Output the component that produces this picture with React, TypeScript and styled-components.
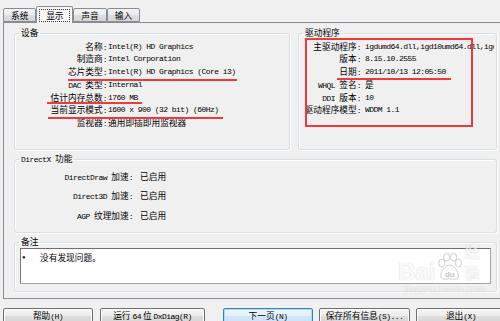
import React from "react";
import styled, { createGlobalStyle } from "styled-components";

const Global = createGlobalStyle`
  html, body { margin: 0; padding: 0; background: #f0f0f0; }
  body { width: 500px; height: 321px; overflow: hidden; }
`;

const Window = styled.div`
  position: relative;
  width: 500px;
  height: 321px;
  overflow: hidden;
  background: #f0f0f0;
  color: #000;
  font-family: "Noto Sans CJK SC", "Liberation Sans", sans-serif;
  font-size: 8.7px;
  line-height: 12.8px;
`;

const M = styled.span`
  font-family: "Liberation Mono", monospace;
  font-size: 8px;
  letter-spacing: -0.55px;
`;

const TabStrip = styled.div`
  display: flex;
  align-items: flex-end;
  height: 22px;
  padding-left: 3px;
  box-sizing: border-box;
  position: relative;
  z-index: 2;
`;

const Tab = styled.div<{ $active?: boolean }>`
  box-sizing: border-box;
  display: flex;
  align-items: center;
  height: ${(p) => (p.$active ? 17 : 14)}px;
  margin-bottom: ${(p) => (p.$active ? -1 : 0)}px;
  padding: 0 ${(p) => (p.$active ? 2 : 7)}px;
  border: 1px solid #898c95;
  border-bottom: ${(p) => (p.$active ? "none" : "1px solid #898c95")};
  border-radius: 2px 2px 0 0;
  background: ${(p) =>
    p.$active
      ? "#f7f7f7"
      : "linear-gradient(#f3f3f3 0%, #ebebeb 50%, #dedede 51%, #d6d6d6 100%)"};
  line-height: 11px;
`;

const TabLabel = styled.span<{ $focus?: boolean }>`
  display: inline-block;
  padding: 0 ${(p) => (p.$focus ? 5.8 : 0)}px;
  border: ${(p) => (p.$focus ? "1px dotted #333" : "none")};
`;

const Panel = styled.div`
  box-sizing: border-box;
  margin-left: 3px;
  width: 510px;
  height: 277px;
  border: 1px solid #898c95;
  background: #f0f0f0;
  padding: 4px 0 0 10px;
  display: flex;
  flex-direction: column;
  gap: 3px;
`;

const Column = styled.div`
  width: 483px;
  display: flex;
  flex-direction: column;
  gap: 3px;
`;

const TopRow = styled.div`
  display: flex;
  gap: 8px;
`;

const Group = styled.fieldset<{ $w?: number; $h: number }>`
  box-sizing: border-box;
  margin: 0;
  padding: 0;
  min-width: 0;
  width: ${(p) => (p.$w ? `${p.$w}px` : "100%")};
  height: ${(p) => p.$h}px;
  border: 1px solid #d5dfe5;
  border-radius: 3px;
  box-shadow: inset 1px 1px 0 #fdfdfd, 1px 1px 0 #fdfdfd;
  overflow: hidden;
`;

const Legend = styled.legend`
  margin-left: 4px;
  padding: 0 2px;
  line-height: 12px;
  height: 12px;
  font-size: 8.7px;
`;

const InfoGrid = styled.div<{ $label: number; $gap: number; $rowGap?: number; $lh: number; $top: number }>`
  display: grid;
  grid-template-columns: ${(p) => p.$label}px minmax(0, 1fr);
  grid-auto-rows: ${(p) => p.$lh}px;
  column-gap: ${(p) => p.$gap}px;
  row-gap: ${(p) => p.$rowGap ?? 0}px;
  line-height: ${(p) => p.$lh}px;
  padding-top: ${(p) => p.$top}px;
  padding-right: 2px;
`;

const Key = styled.div`
  text-align: right;
  white-space: nowrap;
  overflow: hidden;
  &::after {
    content: ":";
    font-family: "Liberation Mono", monospace;
    font-size: 8px;
    letter-spacing: -0.55px;
  }
`;

const Val = styled.div<{ $mono?: boolean }>`
  white-space: nowrap;
  overflow: hidden;
  ${(p) =>
    p.$mono
      ? `font-family: "Liberation Mono", monospace; font-size: 8px; letter-spacing: -0.55px;`
      : ""}
`;

const NoteBox = styled.div`
  box-sizing: border-box;
  margin: 0 5px;
  height: 36px;
  background: #fff;
  border: 1px solid #a3a3a3;
  border-top-color: #6e6e6e;
  border-left-color: #7a7a7a;
  padding: 2px 0 0 1px;
  line-height: 13px;
  display: flex;
  align-items: flex-start;
`;

const Bullet = styled.span`
  width: 18px;
  font-family: "Liberation Sans", sans-serif;
  font-size: 6px;
  color: #102040;
`;

const ButtonBar = styled.div`
  display: flex;
  margin-top: 9px;
  padding-left: 3px;
`;

const ButtonGroup = styled.div<{ $gap: number; $ml?: number }>`
  display: flex;
  gap: ${(p) => p.$gap}px;
  margin-left: ${(p) => p.$ml ?? 0}px;
`;

const Button = styled.div<{ $w: number; $default?: boolean }>`
  box-sizing: border-box;
  width: ${(p) => p.$w}px;
  height: 16px;
  flex-shrink: 0;
  border: 1px solid ${(p) => (p.$default ? "#3c7fb1" : "#707070")};
  border-radius: 2px;
  background: ${(p) =>
    p.$default
      ? "linear-gradient(#eef6fc 0%, #e3f0fa 50%, #d3e8f7 51%, #c9e2f5 100%)"
      : "linear-gradient(#f4f4f4 0%, #ececec 50%, #dfdfdf 51%, #d4d4d4 100%)"};
  box-shadow: inset 0 0 0 1px ${(p) => (p.$default ? "#a9dcf7" : "#fbfbfb")};
  text-align: center;
  line-height: 13px;
  white-space: nowrap;
`;

const Marks = styled.div`
  position: absolute;
  inset: 0;
  pointer-events: none;
  z-index: 5;
`;

const RedBox = styled.div`
  position: absolute;
  left: 305px;
  top: 38px;
  width: 168px;
  height: 89px;
  box-sizing: border-box;
  border: 2px solid #ee3a3a;
`;

const RedLine = styled.div`
  position: absolute;
  height: 2px;
  background: #ee3a3a;
`;

const Watermark = styled.div`
  position: absolute;
  left: 398px;
  top: 236px;
  width: 96px;
  color: rgba(255, 255, 255, 0.92);
  font-family: "Liberation Sans", sans-serif;
  text-shadow: 0 0 1px rgba(120, 120, 120, 0.55);
  opacity: 0.7;
  z-index: 4;
`;

const WmTop = styled.div`
  display: flex;
  align-items: flex-end;
  height: 48px;
`;

const WmBai = styled.span`
  font-size: 24px;
  font-weight: bold;
  line-height: 24px;
`;

const WmJy = styled.span`
  font-family: "Noto Sans CJK SC", sans-serif;
  font-size: 15px;
  line-height: 22px;
  font-weight: bold;
`;

const WmUrl = styled.div`
  font-size: 9.5px;
  line-height: 10px;
  letter-spacing: 0.2px;
  padding-left: 7px;
`;

const devRows: [React.ReactNode, string, boolean][] = [
  ["名称", "Intel(R) HD Graphics", true],
  ["制造商", "Intel Corporation", true],
  ["芯片类型", "Intel(R) HD Graphics (Core i3)", true],
  [<><M>DAC </M>类型</>, "Internal", true],
  ["估计内存总数", "1760 MB", true],
  ["当前显示模式", "1600 x 900 (32 bit) (60Hz)", true],
  ["监视器", "通用即插即用监视器", false],
];

const drvRows: [React.ReactNode, string, boolean][] = [
  ["主驱动程序", "igdumd64.dll,igd10umd64.dll,igdumdx32.dll,igd10umd32.dll", true],
  ["版本", "8.15.10.2555", true],
  ["日期", "2011/10/13 12:05:50", true],
  [<><M>WHQL </M>签名</>, "是", false],
  [<><M>DDI </M>版本</>, "10", true],
  ["驱动程序模型", "WDDM 1.1", true],
];

const dxRows: [React.ReactNode, string][] = [
  [<><M>DirectDraw </M>加速</>, "已启用"],
  [<><M>Direct3D </M>加速</>, "已启用"],
  [<><M>AGP </M>纹理加速</>, "已启用"],
];

function Paw() {
  return (
    <svg width="30" height="30" viewBox="0 0 30 30" style={{ marginBottom: 2 }}>
      <g fill="rgba(255,255,255,0.9)" stroke="rgba(140,140,140,0.6)" strokeWidth="1">
        <ellipse cx="7" cy="11" rx="3.2" ry="4" />
        <ellipse cx="12" cy="5" rx="3.2" ry="4" />
        <ellipse cx="19" cy="5" rx="3.2" ry="4" />
        <ellipse cx="24" cy="11" rx="3.2" ry="4" />
        <path d="M15 13 C10 13 6 20 6 24 C6 28 10 28 15 27 C20 28 24 28 24 24 C24 20 20 13 15 13 Z" />
      </g>
      <text x="15" y="25" textAnchor="middle" fontSize="8" fontWeight="bold" fill="rgba(150,150,150,0.6)" fontFamily="Liberation Sans, sans-serif">du</text>
    </svg>
  );
}

export default function App() {
  return (
    <Window>
      <Global />
      <TabStrip>
        <Tab><TabLabel>系统</TabLabel></Tab>
        <Tab $active><TabLabel $focus>显示</TabLabel></Tab>
        <Tab><TabLabel>声音</TabLabel></Tab>
        <Tab><TabLabel>输入</TabLabel></Tab>
      </TabStrip>
      <Panel>
        <Column>
          <TopRow>
            <Group $w={276} $h={123}>
              <Legend>设备</Legend>
              <InfoGrid $label={92} $gap={1} $lh={12.8} $top={1.5}>
                {devRows.map(([k, v, mono], i) => (
                  <React.Fragment key={i}>
                    <Key>{k}</Key>
                    <Val $mono={mono}>{v}</Val>
                  </React.Fragment>
                ))}
              </InfoGrid>
            </Group>
            <Group $w={199} $h={123}>
              <Legend>驱动程序</Legend>
              <InfoGrid $label={62} $gap={4} $lh={12.8} $top={1.5}>
                {drvRows.map(([k, v, mono], i) => (
                  <React.Fragment key={i}>
                    <Key>{k}</Key>
                    <Val $mono={mono}>{v}</Val>
                  </React.Fragment>
                ))}
              </InfoGrid>
            </Group>
          </TopRow>
          <Group $h={80}>
            <Legend><M>DirectX </M>功能</Legend>
            <InfoGrid $label={118} $gap={7} $rowGap={6.5} $lh={13} $top={4.5}>
              {dxRows.map(([k, v], i) => (
                <React.Fragment key={i}>
                  <Key>{k}</Key>
                  <Val>{v}</Val>
                </React.Fragment>
              ))}
            </InfoGrid>
          </Group>
          <Group $h={56}>
            <Legend>备注</Legend>
            <NoteBox>
              <Bullet>●</Bullet>
              <span>没有发现问题。</span>
            </NoteBox>
          </Group>
        </Column>
      </Panel>
      <ButtonBar>
        <ButtonGroup $gap={7}>
          <Button $w={90}>帮助<M>(H)</M></Button>
          <Button $w={105}>运行 <M>64</M> 位 <M>DxDiag(R)</M></Button>
        </ButtonGroup>
        <ButtonGroup $gap={6} $ml={18}>
          <Button $w={90} $default>下一页<M>(N)</M></Button>
          <Button $w={91}>保存所有信息<M>(S)...</M></Button>
          <Button $w={90}>退出<M>(X)</M></Button>
        </ButtonGroup>
      </ButtonBar>
      <Watermark>
        <WmTop>
          <WmBai>Bai</WmBai>
          <Paw />
          <WmJy>经验</WmJy>
        </WmTop>
        <WmUrl>jingyan.baidu.com</WmUrl>
      </Watermark>
      <Marks>
        <RedBox />
        <RedLine style={{ left: 68, top: 79, width: 169 }} />
        <RedLine style={{ left: 47, top: 102, width: 95 }} />
        <RedLine style={{ left: 48, top: 117, width: 175 }} />
        <RedLine style={{ left: 337, top: 78, width: 114 }} />
      </Marks>
    </Window>
  );
}
